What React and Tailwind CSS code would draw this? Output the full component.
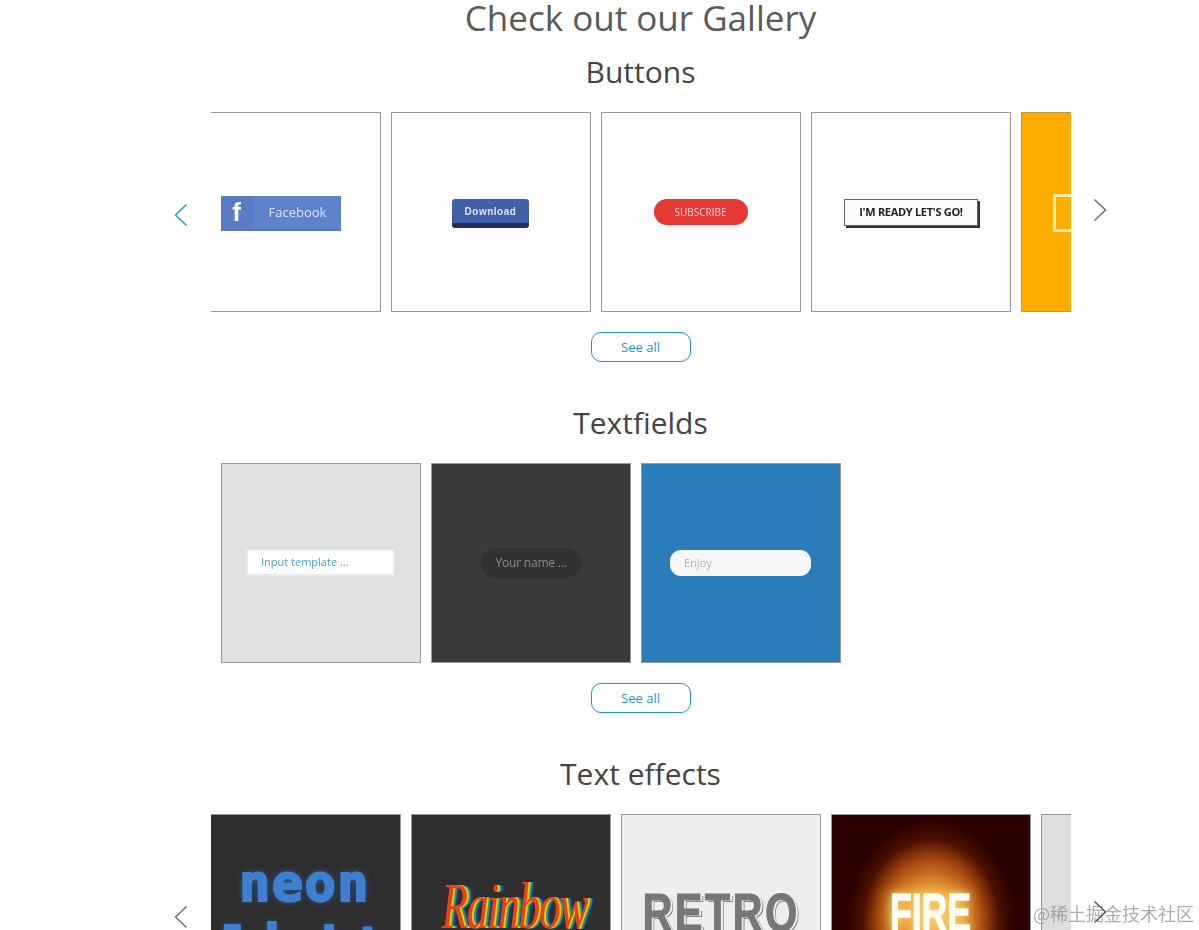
const font = { fontFamily: '"Open Sans", "Noto Sans", sans-serif' };

function Arrow({ color, className }) {
  return (
    <svg width="14" height="24" viewBox="0 0 14 24" fill="none" className={className}>
      <path d={color.dir === "left" ? "M12.5 1.5 L1.5 12 L12.5 22.5" : "M1.5 1.5 L12.5 12 L1.5 22.5"} stroke={color.stroke} strokeWidth="1.4" />
    </svg>
  );
}

function Card({ className = "", children }) {
  return (
    <div className={`w-[200px] h-[200px] shrink-0 border border-[#999] flex items-center justify-center overflow-hidden ${className}`}>
      {children}
    </div>
  );
}

function Carousel({ offset, leftColor, rightColor, children }) {
  return (
    <div className="flex justify-center h-[200px]">
      <div className="w-[37px] pt-[91px]">
        {leftColor && <Arrow color={{ dir: "left", stroke: leftColor }} />}
      </div>
      <div className="w-[860px] overflow-hidden">
        <div className={`flex gap-[10px] ${offset}`}>{children}</div>
      </div>
      <div className="w-[37px] pt-[86px] pl-[22px]">
        {rightColor && <Arrow color={{ dir: "right", stroke: rightColor }} />}
      </div>
    </div>
  );
}

function SeeAll() {
  return (
    <div className="flex justify-center mt-[20px]">
      <a className="w-[100px] h-[30px] pt-px border border-[#1a96d8] rounded-[10px] flex items-center justify-center text-[13px] text-[#1a96d8]">
        See all
      </a>
    </div>
  );
}

function Title({ children }) {
  return <h2 className="h-[40px] leading-[39px] text-[30px] text-center text-[#444] mb-[20px]">{children}</h2>;
}

export default function App() {
  return (
    <div style={font} className="relative h-[930px] overflow-hidden bg-white pl-[82px]">
      <h1 className="h-[52px] leading-[36px] text-[35px] text-center text-[#5a5a5a]">Check out our Gallery</h1>

      <section>
        <Title>Buttons</Title>
        <Carousel offset="-ml-[30px]" leftColor="#1a96d8" rightColor="#666">
          <Card className="bg-white">
            <div className="w-[120px] h-[35px] mt-[3px] bg-[#5f82cc] border-b-2 border-[#5575bd] flex items-center blur-[0.4px]">
              <div className="w-[32px] h-full bg-[#5a7cc4] flex items-center justify-center text-white text-[26px] font-bold" style={{ fontFamily: '"Liberation Sans", sans-serif' }}>f</div>
              <span className="ml-[16px] text-[13px] text-[#d8e2f5]">Facebook</span>
            </div>
          </Card>
          <Card className="bg-[#fdfdfd]">
            <div className="w-[77px] h-[29px] mt-[3px] rounded-[3px] bg-[#3f5fa8] border-b-[5px] border-[#1f3156] flex items-center justify-center text-[10px] font-bold text-[#dfe6f3] tracking-[0.5px] blur-[0.4px]" style={{ fontFamily: '"Liberation Sans", sans-serif' }}>
              Download
            </div>
          </Card>
          <Card className="bg-[#fdfdfd]">
            <div className="w-[94px] h-[26px] rounded-full bg-[#e53935] flex items-center justify-center text-[10px] text-[#fbd5d2] blur-[0.4px]">
              SUBSCRIBE
            </div>
          </Card>
          <Card className="bg-[#fdfdfd]">
            <div className="w-[134px] h-[27px] ml-px bg-[#fbfbfb] border border-[#666] shadow-[2px_2px_0_#333] flex items-center justify-center text-[11px] font-bold text-[#222] tracking-[-0.3px] blur-[0.4px]">
              I'M READY LET'S GO!
            </div>
          </Card>
          <Card className="bg-[#ffad00] border-[#b8964a]">
            <div className="w-[136px] h-[38px] mt-[1px] border-[3px] border-[#ffe9a8] blur-[0.3px]" />
          </Card>
        </Carousel>
        <SeeAll />
      </section>

      <section className="mt-[41px]">
        <Title>Textfields</Title>
        <Carousel offset="ml-[10px]">
          <Card className="bg-[#dfe0e2]">
            <div className="w-[149px] h-[27px] -mt-[1px] bg-white border-2 border-[#eaeaea] flex items-center pl-[13px] text-[11px] text-[#45a6cf] blur-[0.3px]">
              Input template ...
            </div>
          </Card>
          <Card className="bg-[#3a3a3a]">
            <div className="w-[100px] h-[30px] rounded-full bg-[#313131] flex items-center pl-[15px] text-[12px] tracking-[-0.2px] text-[#8a8a8a] blur-[0.3px]">
              Your name ...
            </div>
          </Card>
          <Card className="bg-[#2a7db8] border-[#6b93b0]">
            <div className="w-[141px] h-[26px] rounded-[11px] bg-[#f6f6f6] flex items-center pl-[14px] text-[11px] text-[#b0b0b0] blur-[0.3px]">
              Enjoy
            </div>
          </Card>
        </Carousel>
        <SeeAll />
      </section>

      <section className="mt-[41px]">
        <Title>Text effects</Title>
        <Carousel offset="-ml-[10px]" leftColor="#666" rightColor="#444">
          <Card className="bg-[#2e2e2e] items-start">
            <div
              className="mt-[37px] ml-[8px] text-center text-[52px] leading-[63px] tracking-[1.5px] font-bold text-[#3f7fd0] [-webkit-text-stroke:2px_#3f7fd0] [text-shadow:0_0_6px_#2a6ab8]"
              style={{ fontFamily: '"DejaVu Sans Mono", monospace' }}
            >
              neon<br />light
            </div>
          </Card>
          <Card className="bg-[#2e2e2e] items-start">
            <div
              className="mt-[61px] ml-[8px] scale-x-[0.66] text-[66px] leading-[60px] italic text-[#e8421a] tracking-[-2px] [text-shadow:3px_0_0_#f5c518,6px_0_0_#2aa04a,9px_0_0_#1a3fa8]"
              style={{ fontFamily: '"Liberation Serif", serif' }}
            >
              Rainbow
            </div>
          </Card>
          <Card className="bg-[#eeeeee] items-start">
            <div
              className="mt-[67px] scale-x-[0.77] text-[54px] leading-[60px] font-bold text-[#777] tracking-[3px] [-webkit-text-stroke:1px_#777] [text-shadow:3px_1px_0_#eee,4px_2px_0_#888]"
              style={{ fontFamily: '"Liberation Sans", sans-serif' }}
            >
              RETRO
            </div>
          </Card>
          <Card className="bg-[radial-gradient(ellipse_85px_105px_at_50%_55%,#f0b050_0%,#e09030_37%,#a84a10_61%,#4a1000_81%,#2a0000_100%)] items-start border-[#9a8a86]">
            <div
              className="mt-[67px] scale-x-[0.66] text-[54px] leading-[60px] font-bold text-[#fffdf0] [-webkit-text-stroke:1.5px_#fffdf0] [text-shadow:0_0_10px_#ffe090,0_0_22px_#ffc050]"
              style={{ fontFamily: '"Liberation Sans", sans-serif' }}
            >
              FIRE
            </div>
          </Card>
          <Card className="bg-[#dedede]" />
        </Carousel>
      </section>

      <div
        className="absolute left-[1033px] top-[900px] text-[18px] leading-[26px] text-[#8a8a8a] opacity-70"
        style={{ fontFamily: '"Noto Sans CJK SC", sans-serif' }}
      >
        @稀土掘金技术社区
      </div>
    </div>
  );
}
